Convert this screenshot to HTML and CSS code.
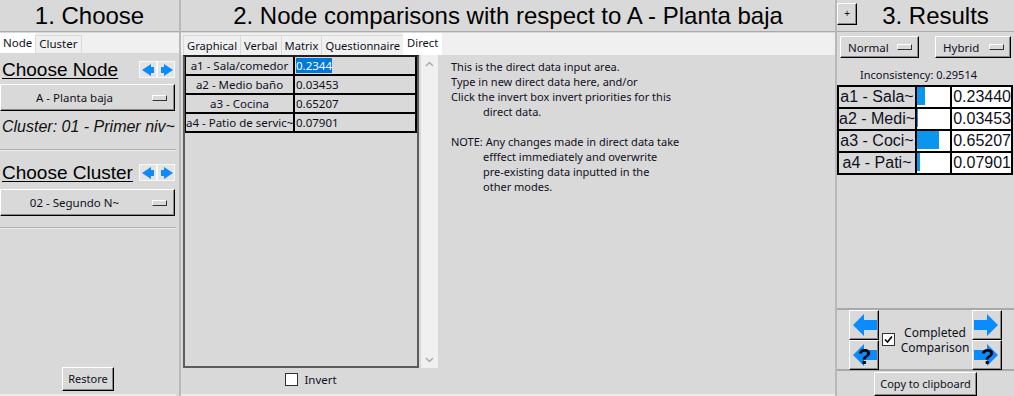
FILE: index.html
```html
<!DOCTYPE html>
<html lang="en">
<head>
    <meta charset="UTF-8">
    <title>Node comparisons</title>
    <link rel="stylesheet" href="styles.css">
</head>
<body>
    <div class="app">
        <!-- 1. Choose -->
        <div class="col left">
            <div class="title">1. Choose</div>
            <div class="tabs">
                <span class="tab active">Node</span>
                <span class="tab">Cluster</span>
            </div>
            <div class="pane">
                <div class="choose-row">
                    <span class="choose-label">Choose Node</span>
                    <span class="mini-arrows">
                        <span class="mini"><svg width="15" height="14" viewBox="0 0 15 14"><polygon points="1,7 10,1 10,13" fill="#0a8cff"/><rect x="9" y="4" width="4" height="6" fill="#0a8cff"/></svg></span>
                        <span class="mini"><svg width="15" height="14" viewBox="0 0 15 14"><polygon points="14,7 5,1 5,13" fill="#0a8cff"/><rect x="2" y="4" width="4" height="6" fill="#0a8cff"/></svg></span>
                    </span>
                </div>
                <div class="menu-btn raised"><span class="menu-text">A - Planta baja</span><span class="menu-ind"></span></div>
                <div class="cluster-info">Cluster: 01 - Primer niv~</div>
                <div class="sep"></div>
                <div class="choose-row cluster-row">
                    <span class="choose-label">Choose Cluster</span>
                    <span class="mini-arrows">
                        <span class="mini"><svg width="15" height="14" viewBox="0 0 15 14"><polygon points="1,7 10,1 10,13" fill="#0a8cff"/><rect x="9" y="4" width="4" height="6" fill="#0a8cff"/></svg></span>
                        <span class="mini"><svg width="15" height="14" viewBox="0 0 15 14"><polygon points="14,7 5,1 5,13" fill="#0a8cff"/><rect x="2" y="4" width="4" height="6" fill="#0a8cff"/></svg></span>
                    </span>
                </div>
                <div class="menu-btn raised small"><span class="menu-text">02 - Segundo N~</span><span class="menu-ind"></span></div>
                <div class="sep"></div>
                <div class="spacer"></div>
                <div class="restore-row"><span class="btn raised">Restore</span></div>
            </div>
        </div>

        <!-- 2. Node comparisons -->
        <div class="col mid">
            <div class="title">2. Node comparisons with respect to A - Planta baja</div>
            <div class="tabs mid-tabs">
                <span class="tab">Graphical</span>
                <span class="tab">Verbal</span>
                <span class="tab">Matrix</span>
                <span class="tab">Questionnaire</span>
                <span class="tab active">Direct</span>
            </div>
            <div class="mid-body">
                <div class="grid-col">
                    <div class="grid-area">
                        <div class="grid-box">
                            <div class="grid-row"><span class="k">a1 - Sala/comedor</span><span class="v"><span class="sel">0.2344</span></span></div>
                            <div class="grid-row"><span class="k">a2 - Medio baño</span><span class="v">0.03453</span></div>
                            <div class="grid-row"><span class="k">a3 - Cocina</span><span class="v">0.65207</span></div>
                            <div class="grid-row"><span class="k">a4 - Patio de servic~</span><span class="v">0.07901</span></div>
                        </div>
                        <div class="scroll">
                            <svg width="9" height="6" viewBox="0 0 9 6"><polyline points="1,5 4.5,1.5 8,5" fill="none" stroke="#a8a8a8" stroke-width="1.4"/></svg>
                            <svg width="9" height="6" viewBox="0 0 9 6"><polyline points="1,1 4.5,4.5 8,1" fill="none" stroke="#a8a8a8" stroke-width="1.4"/></svg>
                        </div>
                    </div>
                    <div class="invert-row"><span class="check"></span>Invert</div>
                </div>
                <div class="desc">
                    <p>This is the direct data input area.</p>
                    <p>Type in new direct data here, and/or</p>
                    <p>Click the invert box invert priorities for this</p>
                    <p class="ind">direct data.</p>
                    <p class="blank"></p>
                    <p>NOTE: Any changes made in direct data take</p>
                    <p class="ind">efffect immediately and overwrite</p>
                    <p class="ind">pre-existing data inputted in the</p>
                    <p class="ind">other modes.</p>
                </div>
            </div>
        </div>

        <!-- 3. Results -->
        <div class="col right">
            <div class="right-head">
                <span class="plus raised">+</span>
                <span class="right-title">3. Results</span>
            </div>
            <div class="mode-row">
                <div class="mode raised normal">Normal <span class="menu-ind"></span></div>
                <div class="mode raised hybrid">Hybrid <span class="menu-ind"></span></div>
            </div>
            <div class="incons">Inconsistency: 0.29514</div>
            <table class="results">
                <tr><td class="rk">a1 - Sala~</td><td class="rb"><span class="bar" style="width: 23.4%"></span></td><td class="rv">0.23440</td></tr>
                <tr><td class="rk">a2 - Medi~</td><td class="rb"><span class="bar" style="width: 3.5%"></span></td><td class="rv">0.03453</td></tr>
                <tr><td class="rk">a3 - Coci~</td><td class="rb"><span class="bar" style="width: 65.2%"></span></td><td class="rv">0.65207</td></tr>
                <tr><td class="rk">a4 - Pati~</td><td class="rb"><span class="bar" style="width: 7.9%"></span></td><td class="rv">0.07901</td></tr>
            </table>
            <div class="spacer"></div>
            <div class="nav">
                <div class="nav-btns">
                    <span class="nav-btn raised"><svg width="26" height="26" viewBox="0 0 26 26"><polygon points="2,13 13,2 13,8 26,8 26,18 13,18 13,24" fill="#0a8cff"/></svg></span>
                    <span class="nav-btn raised"><svg width="26" height="26" viewBox="0 0 26 26"><polygon points="2,13 13,2 13,8 26,8 26,18 13,18 13,24" fill="#0a8cff"/></svg><span class="q">?</span></span>
                </div>
                <div class="completed">
                    <span class="check checked"><svg width="11" height="11" viewBox="0 0 11 11"><polyline points="2,5.5 4.5,8 9,2.5" fill="none" stroke="#000" stroke-width="1.6"/></svg></span>
                    <span class="completed-text">Completed<br>Comparison</span>
                </div>
                <div class="nav-btns">
                    <span class="nav-btn raised"><svg width="26" height="26" viewBox="0 0 26 26"><polygon points="24,13 13,2 13,8 0,8 0,18 13,18 13,24" fill="#0a8cff"/></svg></span>
                    <span class="nav-btn raised"><svg width="26" height="26" viewBox="0 0 26 26"><polygon points="24,13 13,2 13,8 0,8 0,18 13,18 13,24" fill="#0a8cff"/></svg><span class="q">?</span></span>
                </div>
            </div>
            <div class="copy-row"><span class="btn raised copy">Copy to clipboard</span></div>
        </div>
    </div>
</body>
</html>
```

FILE: styles.css
```css
*{
    margin: 0;
    padding: 0;
    box-sizing: border-box;
}
body{
    width: 1014px;
    height: 396px;
    overflow: hidden;
    background-color: #d9d9d9;
    font-family: "Noto Sans", sans-serif;
    font-size: 11px;
    color: #10101c;
}

.app{
    display: flex;
    height: 396px;
}
.col{
    display: flex;
    flex-direction: column;
    height: 396px;
}
.left{
    width: 181px;
    border-right: 2px solid #b9b9b9;
}
.mid{
    width: 656px;
    border-right: 2px solid #b9b9b9;
}
.right{
    flex: 1;
}

.title{
    height: 32px;
    border-bottom: 1px solid #a9a9a9;
    font-family: "Liberation Sans", Arial, sans-serif;
    font-size: 24px;
    line-height: 31px;
    text-align: center;
    color: #000;
}

/* tab strips */
.tabs{
    margin-top: 1px;
    height: 20px;
    background-color: #f0f0f0;
    display: flex;
    align-items: flex-end;
    font-size: 11.5px;
}
.tab{
    height: 18px;
    line-height: 16px;
    padding: 0 3px;
    border: 1px solid #d9d9d9;
    border-bottom: none;
    margin-left: -1px;
}
.tab:first-child{
    margin-left: 0;
}
.tab.active{
    height: 20px;
    line-height: 19px;
    background-color: #fff;
    border: none;
    padding: 0 4px 0 3px;
}
.mid-tabs{
    height: 22px;
    padding-left: 2px;
    font-size: 11.2px;
}
.mid-tabs .tab{
    height: 20px;
    line-height: 19px;
    padding: 0 3px;
}
.mid-tabs .tab.active{
    height: 22px;
    line-height: 20px;
    padding: 0 4px;
}

/* left pane */
.pane{
    flex: 1;
    display: flex;
    flex-direction: column;
    padding-top: 4px;
}
.choose-row{
    display: flex;
    align-items: center;
    justify-content: space-between;
    height: 25px;
    padding: 0 4px 0 2px;
}
.choose-label{
    font-family: "Liberation Sans", Arial, sans-serif;
    font-size: 19px;
    text-decoration: underline;
    text-underline-offset: 2px;
    color: #000;
}
.mini-arrows{
    display: flex;
}
.mini{
    width: 18px;
    height: 17px;
    background-color: #e4e4e4;
    border: 1px solid #f8f8f8;
    display: flex;
    align-items: center;
    justify-content: center;
}
.raised{
    background-color: #d9d9d9;
    border: 1px solid;
    border-color: #fff #000 #000 #fff;
    box-shadow: inset -1px -1px #8a8a8a;
}
.menu-btn{
    margin-top: 2px;
    width: 175px;
    height: 27px;
    display: flex;
    align-items: center;
    font-size: 11.5px;
}
.menu-text{
    flex: 1;
    text-align: center;
    padding-right: 4px;
}
.menu-ind{
    display: inline-block;
    width: 15px;
    height: 6px;
    margin-right: 7px;
    background-color: #d9d9d9;
    border: 1px solid;
    border-color: #fff #333 #333 #fff;
}
.cluster-info{
    margin-top: 5px;
    padding-left: 2px;
    font-family: "Liberation Sans", Arial, sans-serif;
    font-style: italic;
    font-size: 16px;
    line-height: 22px;
    color: #111;
    white-space: nowrap;
}
.sep{
    margin-top: 11px;
    width: 176px;
    height: 2px;
    border-top: 1px solid #b0b0b0;
    border-bottom: 1px solid #ececec;
}
.cluster-row{
    margin-top: 9px;
}
.menu-btn.small{
    margin-top: 4px;
    height: 27px;
}
.spacer{
    flex: 1;
}
.restore-row{
    width: 176px;
    display: flex;
    justify-content: center;
    padding-bottom: 3px;
    border-bottom: 2px solid #ececec;
}
.btn{
    display: inline-block;
    height: 24px;
    line-height: 21px;
    padding: 0 5px;
    font-size: 11px;
}

/* middle body */
.mid-body{
    flex: 1;
    display: flex;
    border-bottom: 2px solid #ececec;
}
.grid-col{
    display: flex;
    flex-direction: column;
    padding-left: 2px;
}
.grid-area{
    display: flex;
    gap: 2px;
}
.grid-box{
    width: 236px;
    height: 313px;
    border: 2px solid #5c5c5c;
    border-top-color: #202020;
}
.grid-row{
    display: flex;
    height: 19px;
    border-bottom: 2px solid #000;
    font-size: 11.5px;
    line-height: 17px;
}
.grid-row .k{
    width: 110px;
    border-right: 2px solid #000;
    border-left: 1px solid #000;
    text-align: center;
    white-space: nowrap;
}
.grid-row .v{
    flex: 1;
    padding-left: 1px;
    border-right: 2px solid #000;
}
.sel{
    background-color: #0078d7;
    color: #fff;
}
.scroll{
    width: 17px;
    height: 313px;
    background-color: #f0f0f0;
    display: flex;
    flex-direction: column;
    align-items: center;
    justify-content: space-between;
    padding: 6px 0 5px;
}
.invert-row{
    width: 256px;
    height: 22px;
    display: flex;
    align-items: center;
    justify-content: center;
    gap: 6px;
    font-size: 11.5px;
}
.check{
    width: 13px;
    height: 13px;
    background-color: #fff;
    border: 1px solid #333;
    display: inline-flex;
    align-items: center;
    justify-content: center;
}
.desc{
    padding: 4px 0 0 12px;
    line-height: 15px;
    font-size: 11px;
}
.desc .ind{
    padding-left: 32px;
}
.desc .blank{
    height: 15px;
}

/* right column */
.right-head{
    height: 32px;
    border-bottom: 1px solid #a9a9a9;
    display: flex;
    align-items: flex-start;
}
.plus{
    width: 20px;
    height: 22px;
    margin: 3px 0 0 0;
    font-size: 10px;
    line-height: 19px;
    text-align: center;
}
.right-title{
    flex: 1;
    text-align: center;
    font-family: "Liberation Sans", Arial, sans-serif;
    font-size: 24px;
    line-height: 31px;
    color: #000;
}
.mode-row{
    display: flex;
    justify-content: space-between;
    padding: 3px 3px 0 3px;
    margin-top: 1px;
}
.mode{
    height: 22px;
    display: flex;
    align-items: center;
    justify-content: space-between;
    padding-left: 7px;
    font-size: 11.5px;
}
.mode .menu-ind{
    margin-right: 6px;
}
.normal{
    width: 79px;
}
.hybrid{
    width: 76px;
}
.incons{
    margin-top: 9px;
    padding-right: 14px;
    text-align: center;
    font-size: 11px;
    line-height: 16px;
}
.results{
    margin-top: 2px;
    border-collapse: collapse;
    width: 176px;
    font-family: "Liberation Sans", Arial, sans-serif;
    font-size: 16px;
}
.results td{
    border: 2px solid #000;
    height: 22px;
    padding: 0;
    line-height: 18px;
}
.rk{
    width: 78px;
    text-align: center;
    background-color: #d9d9d9;
    white-space: nowrap;
}
.rb{
    width: 37px;
    background-color: #fff;
    vertical-align: top;
}
.bar{
    display: block;
    height: 18px;
    background-color: #0a95ee;
}
.rv{
    background-color: #fff;
    padding-left: 1px !important;
}
.nav{
    height: 63px;
    border-top: 2px solid #a9a9a9;
    border-bottom: 2px solid #a9a9a9;
    display: flex;
    align-items: center;
    justify-content: space-between;
    padding: 0 12px 0 12px;
}
.nav-btns{
    display: flex;
    flex-direction: column;
}
.nav-btn{
    position: relative;
    width: 30px;
    height: 30px;
    display: flex;
    align-items: center;
    justify-content: center;
}
.q{
    position: absolute;
    left: 8px;
    top: 3px;
    font-family: "Liberation Sans", Arial, sans-serif;
    font-size: 22px;
    font-weight: bold;
    color: #000;
}
.completed{
    display: flex;
    align-items: center;
    gap: 6px;
    font-size: 12px;
    line-height: 15px;
}
.completed-text{
    text-align: center;
}
.copy-row{
    display: flex;
    justify-content: center;
    padding-top: 1px;
}
.copy{
    height: 24px;
    padding: 0 5px;
}
```
